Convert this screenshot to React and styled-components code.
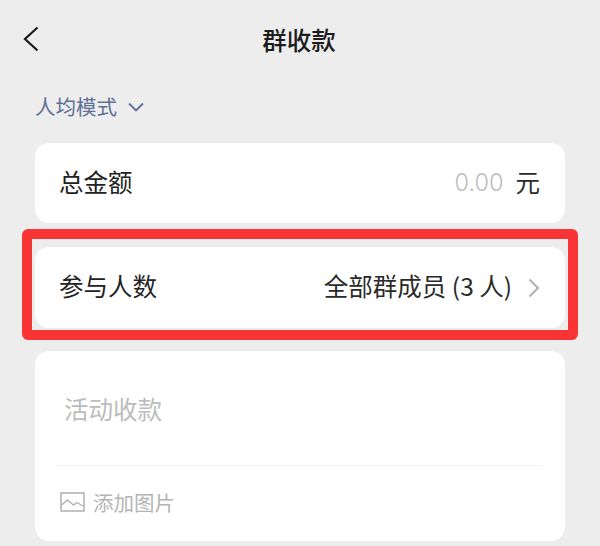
import React from 'react'
import styled, { createGlobalStyle } from 'styled-components'

const GlobalStyle = createGlobalStyle`
  html, body {
    margin: 0;
    padding: 0;
    background: #ededed;
  }
  body {
    font-family: 'Noto Sans CJK SC', 'Liberation Sans', sans-serif;
  }
`

const Page = styled.div`
  width: 600px;
  height: 546px;
  overflow: hidden;
  background: #ededed;
  box-sizing: border-box;
`

const Header = styled.header`
  height: 80px;
  display: flex;
  align-items: center;
  justify-content: center;
  position: relative;
`

const BackButton = styled.button`
  position: absolute;
  left: 23px;
  top: 26px;
  padding: 0;
  border: none;
  background: transparent;
  display: block;
  line-height: 0;
`

const Title = styled.h1`
  margin: 0 0 0 -2px;
  font-size: 24.5px;
  line-height: 32px;
  font-weight: 500;
  color: #1c1c1c;
`

const ModeRow = styled.div`
  height: 63px;
  padding: 10px 0 0 35px;
  box-sizing: border-box;
  display: flex;
  align-items: flex-start;
  gap: 11px;
`

const ModeLabel = styled.span`
  font-size: 20.5px;
  line-height: 32px;
  color: #5f7096;
`

const ModeArrow = styled.svg`
  margin-top: 12px;
`

const Cards = styled.div`
  margin: 0 35px;
  display: flex;
  flex-direction: column;
`

const Card = styled.div`
  position: relative;
  background: #fff;
  border-radius: 14px;
  height: ${(props) => props.height}px;
  margin-bottom: ${(props) => props.gap || 0}px;
  box-sizing: border-box;
`

const Row = styled(Card)`
  display: flex;
  align-items: center;
  justify-content: space-between;
  padding: 0 25px 0 24px;
`

const Highlight = styled.div`
  position: absolute;
  left: -13px;
  right: -13px;
  top: -18px;
  bottom: -12px;
  border: 10px solid #f93434;
  border-radius: 6px;
`

const RowLabel = styled.span`
  font-size: 24.5px;
  line-height: 32px;
  padding-bottom: 3px;
  color: #232323;
`

const RowValue = styled.div`
  display: flex;
  align-items: center;
  gap: ${(props) => props.gap}px;
`

const Amount = styled.span`
  font-family: 'Inter', 'Liberation Sans', sans-serif;
  font-size: 23.5px;
  font-weight: 300;
  line-height: 32px;
  color: #bebebe;
`

const ValueText = styled.span`
  font-size: 24.5px;
  line-height: 32px;
  padding-bottom: 3px;
  color: #2a2a2a;
`

const Note = styled.div`
  padding: 42px 23px 0 29px;
  font-size: 24.5px;
  line-height: 32px;
  color: #bcbcbc;
`

const Divider = styled.div`
  height: 1px;
  margin: 40px 0 0 -8px;
  background: #f0f0f0;
`

const AddPicture = styled.div`
  display: flex;
  align-items: center;
  gap: 8px;
  margin: 22px 0 0 25px;
  font-size: 20.5px;
  line-height: 28px;
  color: #b4b4b4;
`

export default function App() {
  return (
    <Page>
      <GlobalStyle />
      <Header>
        <BackButton aria-label="返回">
          <svg width="16" height="26" viewBox="0 0 16 26" fill="none">
            <path d="M14.5 1.5 2 13l12.5 11.5" stroke="#1a1a1a" strokeWidth="2.2" />
          </svg>
        </BackButton>
        <Title>群收款</Title>
      </Header>
      <ModeRow>
        <ModeLabel>人均模式</ModeLabel>
        <ModeArrow width="16" height="10" viewBox="0 0 16 10" fill="none">
          <path d="M1 1.5 8 8.5l7-7" stroke="#5f7096" strokeWidth="1.8" />
        </ModeArrow>
      </ModeRow>
      <Cards>
        <Row height={80} gap={24}>
          <RowLabel>总金额</RowLabel>
          <RowValue gap={12}>
            <Amount>0.00</Amount>
            <ValueText>元</ValueText>
          </RowValue>
        </Row>
        <Row height={81} gap={23}>
          <RowLabel>参与人数</RowLabel>
          <RowValue gap={16}>
            <ValueText>全部群成员 (3 人)</ValueText>
            <svg width="12" height="20" viewBox="0 0 12 20" fill="none">
              <path d="M1.5 1.5 10 10l-8.5 8.5" stroke="#b0b0b0" strokeWidth="2" />
            </svg>
          </RowValue>
          <Highlight />
        </Row>
        <Card height={190}>
          <Note>
            活动收款
            <Divider />
          </Note>
          <AddPicture>
            <svg width="25" height="20" viewBox="0 0 25 20" fill="none">
              <rect x="1" y="1" width="23" height="18" stroke="#b4b4b4" strokeWidth="1.6" />
              <path d="M1 13.5 7.5 8l6 5 3.5-2.5 7 4" stroke="#b4b4b4" strokeWidth="1.4" />
            </svg>
            添加图片
          </AddPicture>
        </Card>
      </Cards>
    </Page>
  )
}
